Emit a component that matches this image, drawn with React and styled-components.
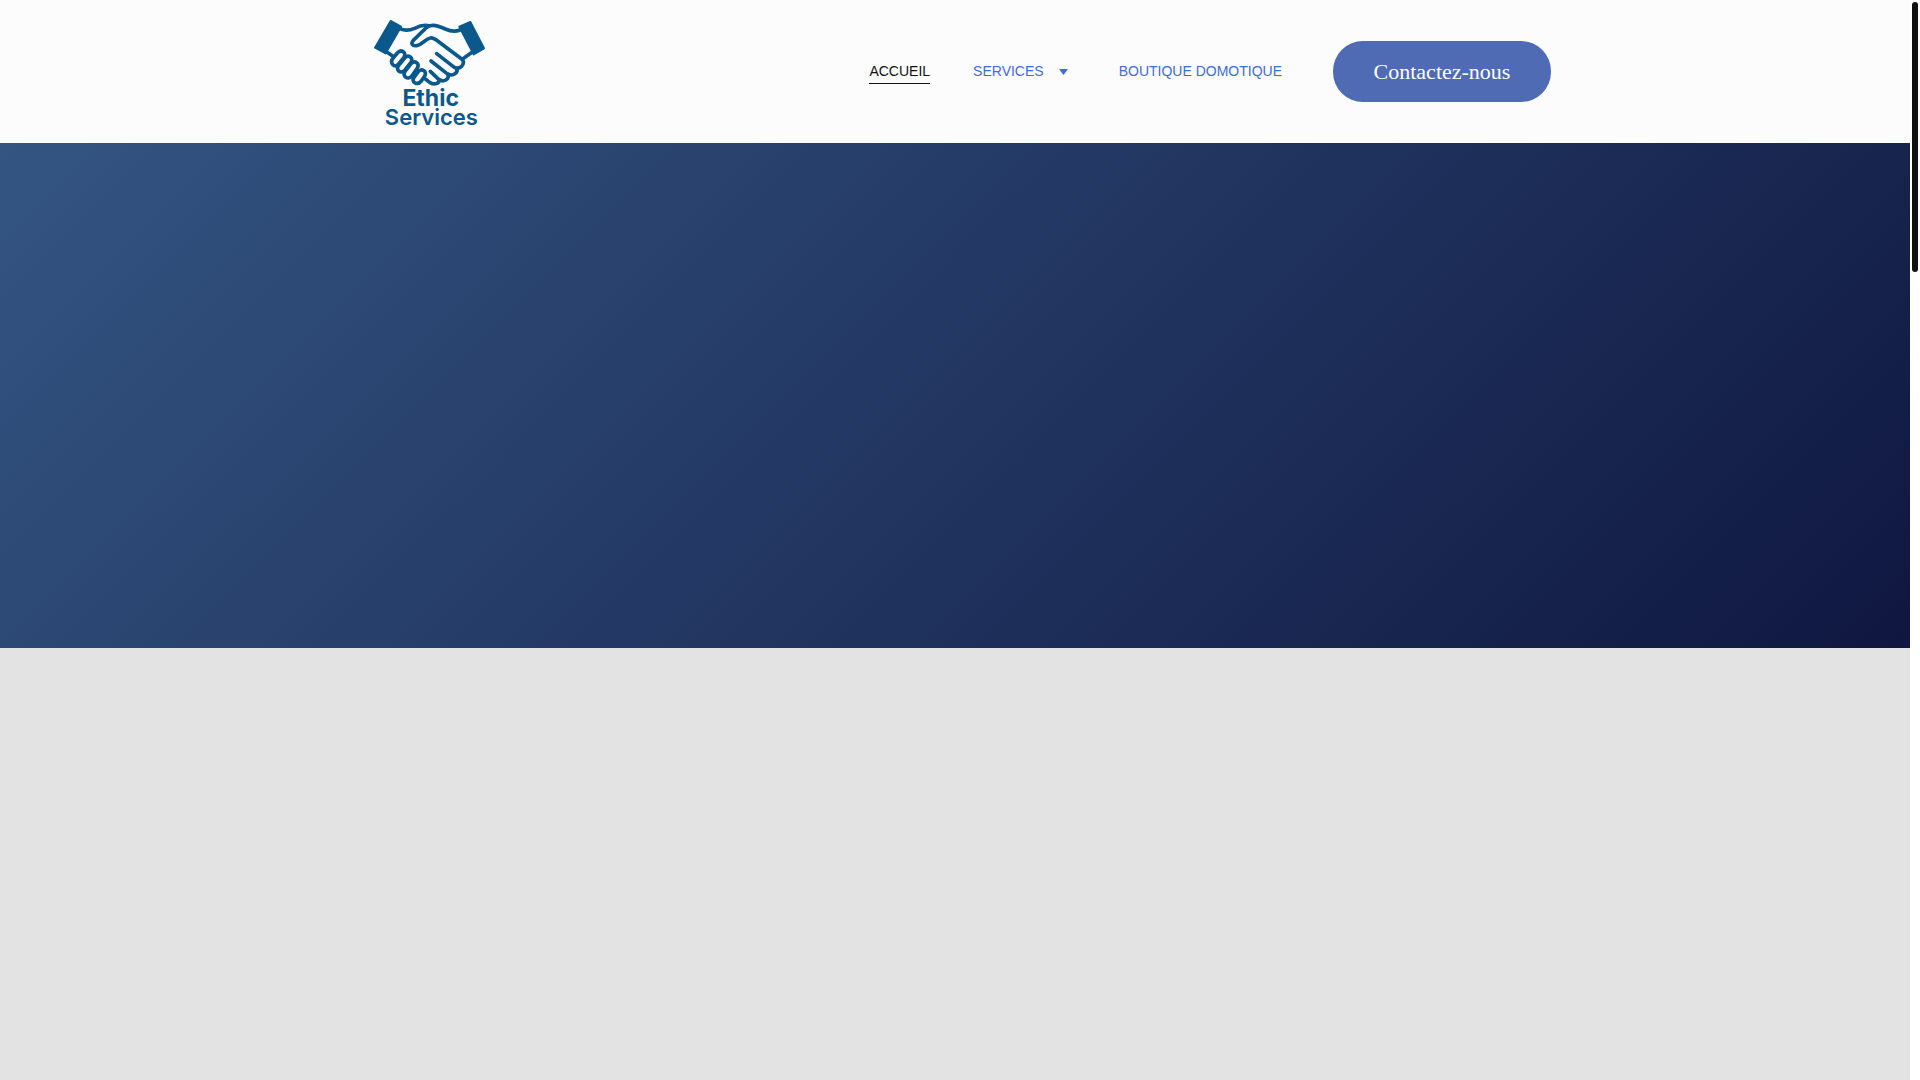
import React from 'react';
import styled, { createGlobalStyle } from 'styled-components';

const GlobalStyle = createGlobalStyle`
  * {
    box-sizing: border-box;
  }

  body {
    margin: 0;
    background: #fff;
    font-family: "Liberation Sans", Arial, sans-serif;
  }
`;

const Page = styled.div`
  display: grid;
  grid-template-columns: 1fr 10px;
  min-height: 100vh;
`;

const Content = styled.div`
  display: flex;
  flex-direction: column;
`;

const Header = styled.header`
  background: #fcfcfc;
`;

const HeaderInner = styled.div`
  display: flex;
  align-items: center;
  justify-content: space-between;
  max-width: 1192px;
  margin: 0 auto;
`;

const LogoLink = styled.a`
  display: block;
`;

const LogoDrawing = styled.svg`
  display: block;
  width: 143px;
  height: 143px;
`;

const Nav = styled.nav`
  display: flex;
  align-items: center;
`;

const NavItem = styled.div`
  display: flex;
  align-items: center;
  margin-left: ${({ $gap }) => $gap || 0}px;
`;

const NavLink = styled.a`
  margin-top: 4px;
  padding-bottom: 4px;
  border-bottom: 1px solid ${({ $active }) => ($active ? '#111' : 'transparent')};
  color: ${({ $active }) => ($active ? '#111' : '#416bda')};
  font-size: 14px;
  line-height: 16px;
  text-decoration: none;
`;

const Caret = styled.svg`
  display: block;
  width: 9px;
  height: 6px;
  margin-left: 15px;
`;

const ContactButton = styled.button`
  min-width: 218px;
  height: 61px;
  margin-left: 51px;
  padding: 0 40px;
  border: 0;
  border-radius: 30px;
  background: #4e6bb3;
  color: #fff;
  font-family: "Liberation Serif", "Times New Roman", serif;
  font-size: 22px;
  line-height: 30px;
  cursor: pointer;
`;

const Hero = styled.section`
  height: 505px;
  background: linear-gradient(135deg, #345582, #0f1740);
`;

const Section = styled.section`
  flex: 1;
  background: #e3e3e3;
`;

const ScrollTrack = styled.div`
  padding: 2px;
  background: #fff;
`;

const ScrollThumb = styled.div`
  height: 270px;
  border-radius: 3px;
  background: #111;
`;

const Logo = () => (
  <LogoDrawing viewBox="27 0 429 429" role="img" aria-label="Ethic Services">
    <g fill="#0b588c" stroke="#0b588c" strokeWidth="6" strokeLinejoin="round">
      <path d="M122 63L153 80L107 160L75 143Z" />
      <path d="M328 80L361 66L402 145L371 163Z" />
    </g>
    <g fill="none" stroke="#0b588c" strokeWidth="11" strokeLinecap="round" strokeLinejoin="round">
      <path d="M150 86C164 93 178 92 194 85C211 76 224 74 237 77" />
      <path d="M330 90C316 96 301 94 286 87C266 77 246 72 233 80C224 86 211 102 192 119C180 131 187 139 200 137C220 134 225 116 241 114C250 112 258 119 266 125L335 177" />
      <path d="M110 156L128 168M366 157L342 174" />
      <path d="M128 176L142 159C154 146 171 158 162 172L146 192C135 206 117 190 128 176Z" />
      <path d="M146 196L164 174C175 161 192 174 183 187L165 210C153 224 135 210 146 196Z" />
      <path d="M165 214L183 191C194 179 211 191 202 204L185 229C173 242 155 227 165 214Z" />
      <path d="M192 232L204 216C215 203 233 214 224 228L214 243C202 258 182 246 192 232Z" />
      <path d="M260 161L313 202C329 210 347 194 337 178" />
      <path d="M243 183L291 221C307 231 326 219 320 205" />
      <path d="M241 214L266 238C281 249 299 237 294 224" />
      <path d="M226 237L240 248C254 256 268 250 268 240" />
    </g>
    <g fill="#0b588c" fontFamily="Inter, sans-serif" textAnchor="middle">
      <text x="242" y="318" fontSize="69" fontWeight="700">Ethic</text>
      <text x="244" y="376" fontSize="66" fontWeight="600">Services</text>
    </g>
  </LogoDrawing>
);

const App = () => (
  <React.Fragment>
    <GlobalStyle />
    <Page>
      <Content>
        <Header>
          <HeaderInner>
            <LogoLink href="#"><Logo /></LogoLink>
            <Nav>
              <NavItem>
                <NavLink href="#" $active>ACCUEIL</NavLink>
              </NavItem>
              <NavItem $gap={43}>
                <NavLink href="#services">SERVICES</NavLink>
                <Caret viewBox="0 0 9 6" aria-hidden="true">
                  <path d="M0 0H9L4.5 6Z" fill="#416bda" />
                </Caret>
              </NavItem>
              <NavItem $gap={51}>
                <NavLink href="#boutique">BOUTIQUE DOMOTIQUE</NavLink>
              </NavItem>
              <ContactButton type="button">Contactez-nous</ContactButton>
            </Nav>
          </HeaderInner>
        </Header>
        <Hero />
        <Section />
      </Content>
      <ScrollTrack aria-hidden="true">
        <ScrollThumb />
      </ScrollTrack>
    </Page>
  </React.Fragment>
);

export default App;
